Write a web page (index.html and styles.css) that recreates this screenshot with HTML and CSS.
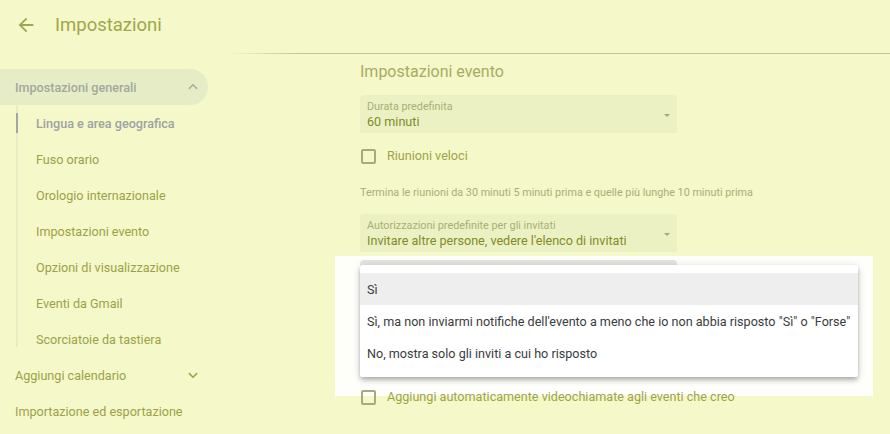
FILE: index.html
```html
<!DOCTYPE html>
<html lang="it">
<head>
<meta charset="utf-8">
<title>Impostazioni</title>
<link rel="stylesheet" href="styles.css">
</head>
<body>
<div class="app">
  <header class="topbar">
    <svg class="back" viewBox="0 0 24 24" aria-hidden="true"><path d="M20 11H7.83l5.59-5.59L12 4l-8 8 8 8 1.41-1.41L7.83 13H20v-2z"/></svg>
    <h1 class="title">Impostazioni</h1>
  </header>
  <div class="body">
    <nav class="sidebar">
      <div class="nav-head nav-head-active">
        <span>Impostazioni generali</span>
        <svg class="chev" viewBox="0 0 24 24" aria-hidden="true"><polyline points="6.5,14.5 12,9 17.5,14.5"/></svg>
      </div>
      <ul class="sublist">
        <li class="sub sub-current">Lingua e area geografica</li>
        <li class="sub">Fuso orario</li>
        <li class="sub">Orologio internazionale</li>
        <li class="sub">Impostazioni evento</li>
        <li class="sub">Opzioni di visualizzazione</li>
        <li class="sub">Eventi da Gmail</li>
        <li class="sub">Scorciatoie da tastiera</li>
      </ul>
      <div class="nav-head">
        <span>Aggiungi calendario</span>
        <svg class="chev" viewBox="0 0 24 24" aria-hidden="true"><polyline points="6.5,9.5 12,15 17.5,9.5"/></svg>
      </div>
      <div class="nav-head">
        <span>Importazione ed esportazione</span>
      </div>
    </nav>
    <main class="main">
      <h2 class="section-title">Impostazioni evento</h2>

      <div class="field field-first">
        <div class="field-text">
          <div class="field-label">Durata predefinita</div>
          <div class="field-value">60 minuti</div>
        </div>
        <span class="caret"></span>
      </div>

      <label class="check-row">
        <span class="box"></span>
        <span class="check-label">Riunioni veloci</span>
      </label>

      <p class="help">Termina le riunioni da 30 minuti 5 minuti prima e quelle più lunghe 10 minuti prima</p>

      <div class="field field-second">
        <div class="field-text">
          <div class="field-label">Autorizzazioni predefinite per gli invitati</div>
          <div class="field-value">Invitare altre persone, vedere l'elenco di invitati</div>
        </div>
        <span class="caret"></span>
      </div>

      <div class="field field-open">
        <div class="backdrop"></div>
        <ul class="menu">
          <li class="menu-item menu-item-active">Sì</li>
          <li class="menu-item">Sì, ma non inviarmi notifiche dell'evento a meno che io non abbia risposto "Sì" o "Forse"</li>
          <li class="menu-item">No, mostra solo gli inviti a cui ho risposto</li>
        </ul>
      </div>

      <label class="check-row check-row-last">
        <span class="box"></span>
        <span class="check-label">Aggiungi automaticamente videochiamate agli eventi che creo</span>
      </label>
    </main>
  </div>
</div>
</body>
</html>
```
FILE: styles.css
```css
html, body {
  margin: 0;
  padding: 0;
  height: 100%;
  overflow: hidden;
}
body {
  background: #f5f8c8;
  font-family: Roboto, "Liberation Sans", Arial, sans-serif;
  font-size: 12.6px;
  color: #9ca248;
}
.app {
  display: flex;
  flex-direction: column;
}
.topbar {
  height: 53px;
  box-sizing: border-box;
  padding: 0 0 3px 15px;
  display: flex;
  align-items: center;
}
.back {
  width: 22px;
  height: 22px;
  fill: #a0a64e;
  flex: none;
}
.title {
  margin: 0 0 0 18px;
  font-size: 18.5px;
  font-weight: 400;
  color: #a0a64e;
  line-height: 24px;
}
.body {
  display: flex;
}
.sidebar {
  width: 230px;
  flex: none;
  padding-top: 16px;
}
.nav-head {
  width: 208px;
  height: 36px;
  box-sizing: border-box;
  padding: 0 6px 0 15px;
  display: flex;
  align-items: center;
  justify-content: space-between;
  color: #9ca248;
  border-radius: 0 18px 18px 0;
}
.nav-head-active {
  background: #e6edc6;
  color: #a2a89e;
  font-weight: 500;
}
.chev {
  width: 18px;
  height: 18px;
  fill: none;
  stroke: currentColor;
  stroke-width: 2;
  flex: none;
}
.nav-head-active .chev {
  stroke: #a8aea4;
}
.sublist {
  list-style: none;
  margin: 0 0 0 16px;
  padding: 0;
  position: relative;
}
.sublist::before {
  content: "";
  position: absolute;
  left: 0;
  top: 0;
  bottom: 10px;
  width: 2px;
  background: #e8ecc2;
}
.sub {
  height: 36px;
  display: flex;
  align-items: center;
  padding-left: 20px;
  position: relative;
}
.sub-current {
  color: #9ea2a4;
  font-weight: 500;
}
.sub-current::before {
  content: "";
  position: absolute;
  left: 0;
  top: 8px;
  bottom: 8px;
  width: 2px;
  background: #a2a6a6;
}
.main {
  flex: 1;
  position: relative;
  isolation: isolate;
  padding: 8px 0 0 130px;
  border-top: 1px solid #c4c48c;
  border-image: linear-gradient(90deg, rgba(196,196,140,0) 0, #c4c48c 70px) 1;
}
.section-title {
  margin: 0;
  font-size: 16px;
  line-height: 20px;
  font-weight: 400;
  color: #a8ac62;
}
.field {
  width: 317px;
  box-sizing: border-box;
  background: #ecf1c4;
  border-radius: 4px 4px 0 0;
  padding: 5px 7px 3px 7px;
  display: flex;
  align-items: center;
  justify-content: space-between;
}
.field-first {
  margin-top: 13px;
}
.field-second {
  margin-top: 14px;
}
.field-label {
  font-size: 10.8px;
  line-height: 14px;
  color: #a9ae74;
}
.field-value {
  font-size: 12.6px;
  line-height: 16px;
  font-weight: 400;
  color: #838a28;
}
.caret {
  width: 0;
  height: 0;
  border-left: 3.5px solid transparent;
  border-right: 3.5px solid transparent;
  border-top: 3.5px solid #a6a880;
  flex: none;
}
.check-row {
  height: 30px;
  margin-top: 8px;
  display: flex;
  align-items: center;
}
.box {
  width: 15px;
  height: 15px;
  box-sizing: border-box;
  border: 2px solid #a8aa7c;
  border-radius: 2px;
  margin-left: 1px;
  flex: none;
}
.check-label {
  margin-left: 11px;
  line-height: 16px;
  color: #9ea448;
}
.help {
  margin: 15px 0 0;
  font-size: 10.8px;
  line-height: 14px;
  color: #a9ae78;
}
.field-open {
  margin-top: 8px;
  height: 38px;
  background: #e4e4e2;
  position: relative;
}
.backdrop {
  position: absolute;
  left: -25px;
  top: -4px;
  width: 538px;
  height: 140px;
  background: #fefefb;
  z-index: -1;
}
.menu {
  position: absolute;
  left: 0;
  top: 5px;
  width: 498px;
  margin: 0;
  padding: 8px 0;
  list-style: none;
  background: #ffffff;
  border-radius: 2px;
  z-index: 2;
  box-shadow: 0 2px 4px -1px rgba(0,0,0,0.2), 0 4px 5px 0 rgba(0,0,0,0.14), 0 1px 10px 0 rgba(0,0,0,0.12);
}
.menu-item {
  height: 32px;
  display: flex;
  align-items: center;
  padding: 0 7px;
  color: #3a3c3e;
  font-size: 12.6px;
  white-space: nowrap;
}
.menu-item-active {
  background: #eeeeee;
}
.check-row-last {
  margin-top: 84px;
}
```
